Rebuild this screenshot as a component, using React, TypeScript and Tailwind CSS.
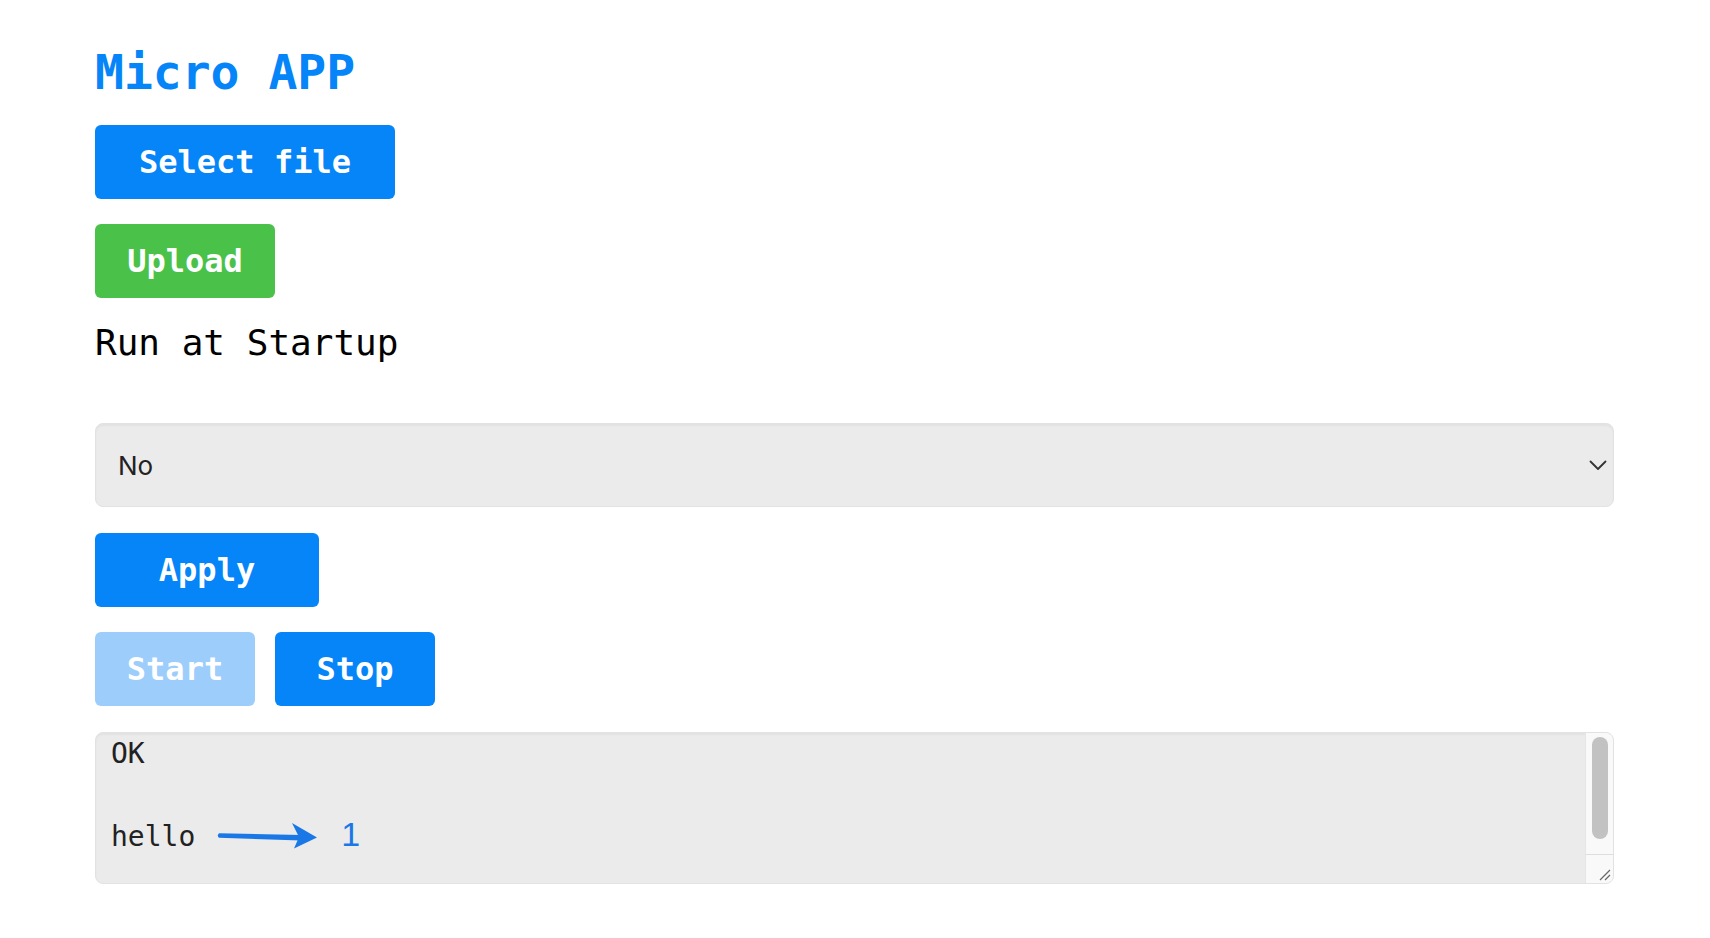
import { useState } from "react";

type ActionButtonProps = {
  label: string;
  width: string;
  tone: "blue" | "green" | "faded";
  disabled?: boolean;
};

const toneClass = {
  blue: "bg-[#0585f8]",
  green: "bg-[#4ac24a]",
  faded: "bg-[#9dcdfb]",
};

function ActionButton({ label, width, tone, disabled }: ActionButtonProps) {
  return (
    <button
      type="button"
      disabled={disabled}
      className={`${width} ${toneClass[tone]} flex h-[74px] items-center justify-center rounded-[6px] text-[32px] font-bold leading-none text-white`}
    >
      {label}
    </button>
  );
}

function Chevron() {
  return (
    <svg width="18" height="11" viewBox="0 0 18 11" fill="none">
      <path d="M1.5 1.5 L9 9 L16.5 1.5" stroke="#333" strokeWidth="1.8" strokeLinecap="round" strokeLinejoin="round" />
    </svg>
  );
}

function Arrow() {
  return (
    <svg width="105" height="32" viewBox="0 0 105 32" className="ml-[20px] mr-[3px] inline-block align-[-5px]">
      <path d="M4 14.2 L86 16 L86 21.5 L4 18.8 Q1.6 16.5 4 14.2 Z" fill="#1a78e6" />
      <path d="M77 4 L102 18.5 L79 29.5 L84 18 Z" fill="#1a78e6" />
    </svg>
  );
}

export default function App() {
  const [runAtStartup] = useState("No");

  return (
    <div className="min-h-screen bg-white pl-[95px] pr-[96px] pt-[44px] font-['DejaVu_Sans_Mono',monospace]">
      <h1 className="text-[48px] font-bold leading-[56px] text-[#0585f8]">Micro APP</h1>

      <div className="mt-[25px] flex flex-col gap-[25px]">
        <ActionButton label="Select file" width="w-[300px]" tone="blue" />
        <ActionButton label="Upload" width="w-[180px]" tone="green" />
      </div>

      <p className="mt-[23px] text-[36px] leading-[44px] text-black">Run at Startup</p>

      <div className="mt-[58px] flex h-[84px] w-full items-center justify-between rounded-[8px] border border-[#e2e2e2] bg-[#ebebeb] pl-[22px] pr-[6px] shadow-[inset_0_2px_2px_rgba(0,0,0,0.04)]">
        <span className="font-['Inter',sans-serif] text-[26px] text-[#222]">{runAtStartup}</span>
        <Chevron />
      </div>

      <div className="mt-[26px]">
        <ActionButton label="Apply" width="w-[224px]" tone="blue" />
      </div>

      <div className="mt-[25px] flex gap-[20px]">
        <ActionButton label="Start" width="w-[160px]" tone="faded" disabled />
        <ActionButton label="Stop" width="w-[160px]" tone="blue" />
      </div>

      <div className="mt-[26px] flex h-[152px] w-full overflow-hidden rounded-[8px] border border-[#e2e2e2] bg-[#ebebeb] shadow-[inset_0_2px_2px_rgba(0,0,0,0.04)]">
        <div className="flex-1 pl-[15px] pt-[1px] text-[28px] leading-[40px] text-[#222]">
          <div>OK</div>
          <div>&nbsp;</div>
          <div className="whitespace-nowrap">
            hello
            <Arrow />
            <span className="ml-[18px] font-['Liberation_Sans',sans-serif] text-[34px] text-[#1a78e6]">1</span>
          </div>
        </div>
        <div className="flex w-[28px] flex-col border-l border-[#e6e6e6] bg-[#f9f9f9]">
          <div className="flex flex-1 justify-center pt-[4px]">
            <div className="h-[102px] w-[16px] rounded-full bg-[#c2c2c2]" />
          </div>
          <div className="flex h-[29px] items-end justify-end border-t border-[#dedede] pb-[2px] pr-[2px]">
            <svg width="14" height="14" viewBox="0 0 14 14">
              <path d="M13 3 L3 13 M13 8 L8 13" stroke="#666" strokeWidth="1.2" />
            </svg>
          </div>
        </div>
      </div>
    </div>
  );
}
